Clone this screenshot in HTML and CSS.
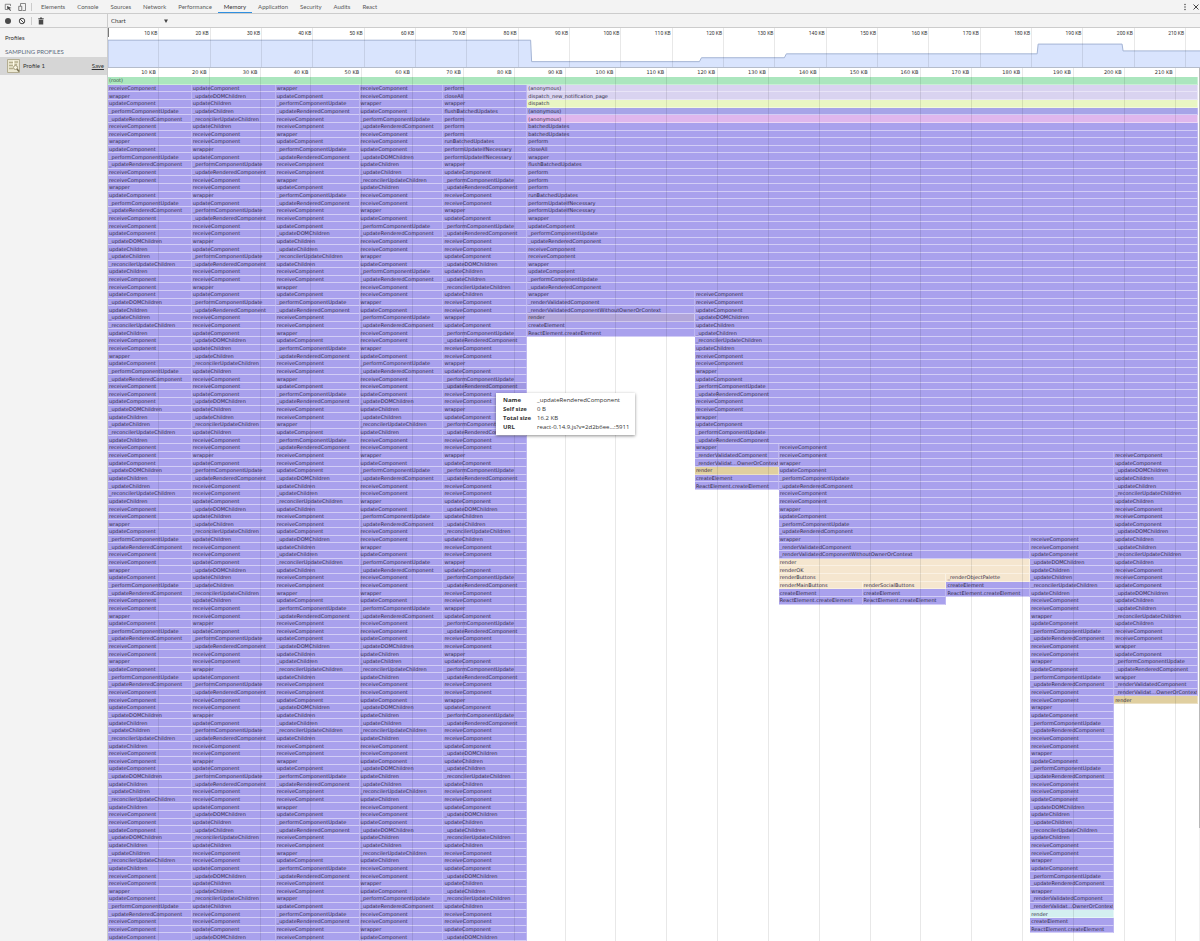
FILE: index.html
```html
<!DOCTYPE html>
<html lang="en">
<head>
<meta charset="utf-8">
<title>Developer Tools</title>
<link rel="stylesheet" href="styles.css">
</head>
<body>
<header class="tabbar">
  <button class="icon-button" aria-label="Inspect element">
    <svg class="icon" viewBox="0 0 16 16"><path d="M6 13H2.500V2.500H13V6" fill="none" stroke="#666" stroke-width="1.500"/><path d="M6 6l9 4-4 1 3 3.500-1.500 1.300-3-3.700L7 14.500z" fill="#444"/></svg>
  </button>
  <button class="icon-button" aria-label="Toggle device toolbar">
    <svg class="icon" viewBox="0 0 16 16"><path d="M5 6V1h10v14H9" fill="none" stroke="#666" stroke-width="1.500"/><path d="M1.500 6.500h6v8.500h-6z" fill="#f3f3f3" stroke="#555" stroke-width="1.500"/></svg>
  </button>
  <span class="divider"></span>
  <nav class="tabs">
    <button class="tab">Elements</button>
    <button class="tab">Console</button>
    <button class="tab">Sources</button>
    <button class="tab">Network</button>
    <button class="tab">Performance</button>
    <button class="tab tab-active">Memory</button>
    <button class="tab">Application</button>
    <button class="tab">Security</button>
    <button class="tab">Audits</button>
    <button class="tab">React</button>
  </nav>
  <button class="icon-button more" aria-label="More options">
    <svg class="icon" viewBox="0 0 16 16"><circle cx="8" cy="3" r="1.600" fill="#555"/><circle cx="8" cy="8" r="1.600" fill="#555"/><circle cx="8" cy="13" r="1.600" fill="#555"/></svg>
  </button>
  <button class="icon-button" aria-label="Close">
    <svg class="icon" viewBox="0 0 16 16"><path d="M3 3l10 10M13 3L3 13" stroke="#444" stroke-width="2"/></svg>
  </button>
</header>
<div class="toolbar">
  <div class="toolbar-left">
    <button class="icon-button" aria-label="Record">
      <svg class="icon" viewBox="0 0 16 16"><circle cx="8" cy="8" r="6" fill="#4a4a4a"/></svg>
    </button>
    <button class="icon-button" aria-label="Clear">
      <svg class="icon" viewBox="0 0 16 16"><circle cx="8" cy="8" r="5.500" fill="none" stroke="#4a4a4a" stroke-width="2"/><path d="M4 4l8 8" stroke="#4a4a4a" stroke-width="2"/></svg>
    </button>
    <span class="divider"></span>
    <button class="icon-button" aria-label="Delete profile">
      <svg class="icon" viewBox="0 0 16 16"><path d="M2.500 2.500h3.500V1h4v1.500h3.500v2h-11zM3.500 5.500h9V15h-9z" fill="#4a4a4a"/></svg>
    </button>
  </div>
  <label class="view-picker">
    <select class="view-select" aria-label="View"><option>Chart</option><option>Heavy (Bottom Up)</option><option>Tree (Top Down)</option></select>
    <svg class="caret" viewBox="0 0 8 8"><path d="M0 1h8L4 8z" fill="#444"/></svg>
  </label>
</div>
<div class="workspace">
  <aside class="sidebar">
    <h1 class="sidebar-title">Profiles</h1>
    <h2 class="sidebar-heading">SAMPLING PROFILES</h2>
    <div class="profile">
      <svg class="profile-icon" viewBox="0 0 26 28"><path d="M1 1h24v26H1z" fill="#ece8d2" stroke="#b3ad92" stroke-width="2"/><path d="M4 7h8M4 13h8M4 19h9M15 6h7M15 11h5" stroke="#b5ae8c" stroke-width="3"/><path d="M13 3v16" stroke="#fffbe6" stroke-width="2"/><circle cx="17" cy="17" r="4" fill="#f7f4e0" stroke="#a39c7c" stroke-width="2"/><path d="M20 20l4 5" stroke="#776f50" stroke-width="3"/></svg>
      <span class="profile-name">Profile 1</span>
      <a class="save" href="#save">Save</a>
    </div>
  </aside>
  <main class="main">
    <section class="overview">
      <svg class="overview-plot" viewBox="0 0 1093 40" preserveAspectRatio="none"><path class="overview-area" d="M0 12.500H423L424 34.500H592L594 30.500H677L679 26.500H930L931 16.500H1015L1016 23.500H1094V41H0z"/></svg>
      <div class="scale scale-overview" id="overview-scale"></div>
      <span class="overview-handle"></span>
    </section>
    <section class="flame">
      <div class="flame-view">
        <div class="frames" id="frames"></div>
        <div class="scale scale-main" id="main-scale"></div>
        <table class="tooltip">
          <tr><th scope="row">Name</th><td>_updateRenderedComponent</td></tr>
          <tr><th scope="row">Self size</th><td>0 B</td></tr>
          <tr><th scope="row">Total size</th><td>16.2 KB</td></tr>
          <tr><th scope="row">URL</th><td>react-0.14.9.js?v=2d2b6ee…:5911</td></tr>
        </table>
      </div>
      <div class="scrollbar"><span class="thumb"></span></div>
    </section>
  </main>
</div>
<script src="chart.js"></script>
</body>
</html>
```
FILE: styles.css
```css
* { box-sizing: border-box; }
body {
  margin: 0;
  height: 100vh;
  display: flex;
  flex-direction: column;
  overflow: hidden;
  background: #fff;
  color: #333;
  font-family: Lato, "Noto Sans", sans-serif;
  font-size: 6px;
  line-height: 8px;
}
button, select {
  margin: 0;
  padding: 0;
  border: 0;
  background: none;
  color: inherit;
  font: inherit;
}
.tabbar, .toolbar {
  display: flex;
  align-items: center;
  flex: none;
  height: 14px;
  background: #f3f3f3;
  border-bottom: 1px solid #ccc;
}
.tabbar { padding-left: 3px; }
.icon-button {
  display: flex;
  justify-content: center;
  width: 9px;
  margin-right: 5px;
}
.icon { width: 8px; height: 8px; display: block; }
.divider { width: 1px; height: 8px; background: #ccc; }
.tabs { display: flex; align-self: stretch; margin-left: 3px; }
.tab {
  padding: 1px 6px 0;
  color: #5a5a5a;
  border-bottom: 1px solid transparent;
}
.tab-active { color: #333; border-bottom-color: #2f8fe0; }
.more { margin-left: auto; margin-right: 2px; }
.tabbar > .icon-button:last-child { margin-right: 0; }
.toolbar-left {
  display: flex;
  align-items: center;
  align-self: stretch;
  width: 108px;
  padding-left: 3px;
  border-right: 1px solid #ccc;
}
.toolbar-left .divider { margin-right: 4px; }
.view-picker { display: flex; align-items: center; padding-left: 3px; }
.view-select { width: 53px; appearance: none; line-height: 8px; }
.caret { width: 4px; height: 4px; }
.workspace { flex: 1; min-height: 0; display: flex; }
.sidebar {
  width: 108px;
  flex: none;
  background: #f3f3f3;
  border-right: 1px solid #ccc;
}
.sidebar-title, .sidebar-heading { margin: 0; padding-left: 5px; font-size: 6px; font-weight: 400; }
.sidebar-title { padding-top: 6px; }
.sidebar-heading { padding-top: 6px; color: #5b6b7c; }
.profile {
  display: flex;
  align-items: center;
  height: 18px;
  margin-top: 1px;
  padding: 0 3px 0 7px;
  background: #d6d6d6;
}
.profile-icon { width: 13px; height: 14px; }
.profile-name { margin-left: 3px; }
.save { margin-left: auto; color: inherit; }
.main { flex: 1; min-width: 0; display: flex; flex-direction: column; }
.overview {
  position: relative;
  height: 40px;
  flex: none;
  border-bottom: 1px solid #b4bccb;
  overflow: hidden;
}
.overview-plot { display: block; width: 100%; height: 100%; }
.overview-area { fill: #d9e4fd; stroke: #a3b3d3; stroke-width: 1; }
.overview-handle {
  position: absolute;
  left: 0;
  top: 0;
  width: 1px;
  height: 9px;
  background: #777;
}
.scale { position: absolute; inset: 0; display: grid; pointer-events: none; font-size: 5px; }
.scale-overview { grid-template-columns: repeat(21, 100fr) 27fr; font-family: Roboto, sans-serif; }
.scale-main { grid-template-columns: repeat(21, 100fr) 44fr; font-family: "DejaVu Sans", sans-serif; }
.tick {
  padding-right: 2px;
  border-right: 1px solid rgba(0, 0, 0, .09);
  text-align: right;
  white-space: nowrap;
}
.scale-overview .tick { padding: 1px 1px 0 0; }
.tick:last-child { border-right: 0; }
.flame { flex: 1; min-height: 0; display: flex; }
.flame-view { position: relative; flex: 1; min-width: 0; padding-top: 9px; }
.frames {
  height: 100%;
  display: grid;
  grid-template-columns: repeat(13, minmax(0, 1fr));
  grid-template-rows: repeat(113, minmax(0, 1fr));
  font-family: "DejaVu Sans", sans-serif;
  font-size: 5px;
}
.frame {
  display: flex;
  align-items: center;
  padding-left: 1px;
  overflow: hidden;
  white-space: nowrap;
  color: #2f2b45;
  background: #a9a1ed;
  border-bottom: 1px solid #d2cdf6;
  border-right: 1px solid #bdb6f2;
}
.frame-root { background: #abe6be; border-color: #c8efd4; color: #33553f; }
.frame-pale { background: #d9d3f0; border-color: #e8e4f7; }
.frame-lime { background: #e9f6c3; border-color: #f2f9dc; }
.frame-blue { background: #a6a4e8; }
.frame-pink { background: #dfb7ed; border-color: #edd6f5; }
.frame-mauve { background: #b2a6d9; border-color: #d0c9ea; }
.frame-tan { background: #e0cfa0; border-color: #ebe0c3; }
.frame-cream { background: #f5e6cf; border-color: #faf1e3; }
.frame-cyan { background: #d3eff0; border-color: #e5f6f7; }
.frame-hover { background: #a098e2; }
.tooltip {
  position: absolute;
  left: 388px;
  top: 325px;
  padding: 3px 6px;
  border-spacing: 0;
  background: #fff;
  box-shadow: 0 1px 3px rgba(0, 0, 0, .45);
  font-family: "Open Sans", "Noto Sans", sans-serif;
  font-size: 6px;
  line-height: 9px;
  white-space: nowrap;
}
.tooltip th, .tooltip td { padding: 0; text-align: left; }
.tooltip th { padding: 0 6px 0 1px; font-weight: 700; }
.scrollbar { width: 2px; flex: none; border-left: 1px solid #fff; background: #f1f1f1; }
.thumb { display: block; height: 87%; background: #b9b9b9; }
```
FILE: chart.js
```javascript
const NAMES = {
  r: 'receiveComponent',
  w: 'wrapper',
  c: 'updateComponent',
  p: '_performComponentUpdate',
  u: '_updateRenderedComponent',
  d: '_updateDOMChildren',
  h: 'updateChildren',
  k: '_updateChildren',
  n: '_reconcilerUpdateChildren',
  v: '_renderValidatedComponent',
  o: '_renderValidatedComponentWithoutOwnerOrContext',
  t: '_renderValidat…OwnerOrContext',
  e: 'createElement',
  E: 'ReactElement.createElement',
  f: 'perform',
  l: 'closeAll',
  b: 'flushBatchedUpdates',
  B: 'runBatchedUpdates',
  N: 'performUpdateIfNecessary',
  a: 'batchedUpdates'
};
// A: composite component update, D: DOM component update.
const BLOCKS = { A: 'rrwcpu', D: 'rrcdhknh' };
const expand = s => s.replace(/[AD]/g, m => BLOCKS[m]);
const frames = document.getElementById('frames');

function add(row, from, to, name, tone) {
  const el = document.createElement('div');
  el.className = 'frame' + (tone ? ' frame-' + tone : '');
  el.style.gridArea = `${row + 1} / ${from} / auto / ${to + 1}`;
  el.textContent = name;
  frames.append(el);
}
function stack(row, from, to, codes) {
  [...expand(codes)].forEach((code, i) => {
    const hovered = from === 5 && row + i === 40;
    add(row + i, from, to, NAMES[code], hovered ? 'hover' : '');
  });
}

add(0, 1, 13, '(root)', 'root');
stack(1, 1, 1, 'rwcpuAADDADDAAAADDDArrc');
stack(1, 2, 2, 'cdhknhAAAADDADDAAAADDrrcd');
stack(1, 3, 3, 'wcpuAADAAAADDADDAAAArr');
stack(1, 4, 4, 'ADAAAADAAAADDDDArrwc');
stack(1, 5, 5, 'flwbfffBNNwcpuADAAAADAAAADDDrrcd');

add(1, 6, 13, '(anonymous)', 'pale');
add(2, 6, 13, 'dispatch_new_notification_page', 'pale');
add(3, 6, 13, 'dispatch', 'lime');
add(4, 6, 13, '(anonymous)', 'blue');
add(5, 6, 13, '(anonymous)', 'pink');
stack(6, 6, 13, 'aaflwbfffBNNwcpuA');

stack(28, 6, 7, 'wvo');
add(31, 6, 7, 'render', 'mauve');
stack(32, 6, 7, 'eE');

stack(28, 8, 13, 'DAA');
stack(48, 8, 8, 'wvt');
add(51, 8, 8, 'render', 'tan');
stack(52, 8, 8, 'eE');

stack(48, 9, 13, 'r');
stack(49, 9, 12, 'rwcpuA');
stack(60, 9, 11, 'wvo');
add(63, 9, 11, 'render', 'cream');
add(64, 9, 11, 'renderOK', 'cream');
add(65, 9, 10, 'renderButtons', 'cream');
add(66, 9, 9, 'renderMainButtons', 'cream');
add(66, 10, 10, 'renderSocialButtons', 'cream');
stack(67, 9, 9, 'eE');
stack(67, 10, 10, 'eE');
add(65, 11, 11, '_renderObjectPalette', 'cream');
stack(66, 11, 11, 'eE');

stack(60, 12, 12, 'DAAAADAwvt');
add(109, 12, 12, 'render', 'cyan');
stack(110, 12, 12, 'eE');

stack(49, 13, 13, 'rcdhknhDDAwvt');
add(81, 13, 13, 'render', 'tan');

for (const id of ['overview-scale', 'main-scale']) {
  const scale = document.getElementById(id);
  for (let i = 1; i <= 22; i++) {
    const tick = document.createElement('span');
    tick.className = 'tick';
    tick.textContent = i < 22 ? `${i * 10} KB` : '';
    scale.append(tick);
  }
}
```
